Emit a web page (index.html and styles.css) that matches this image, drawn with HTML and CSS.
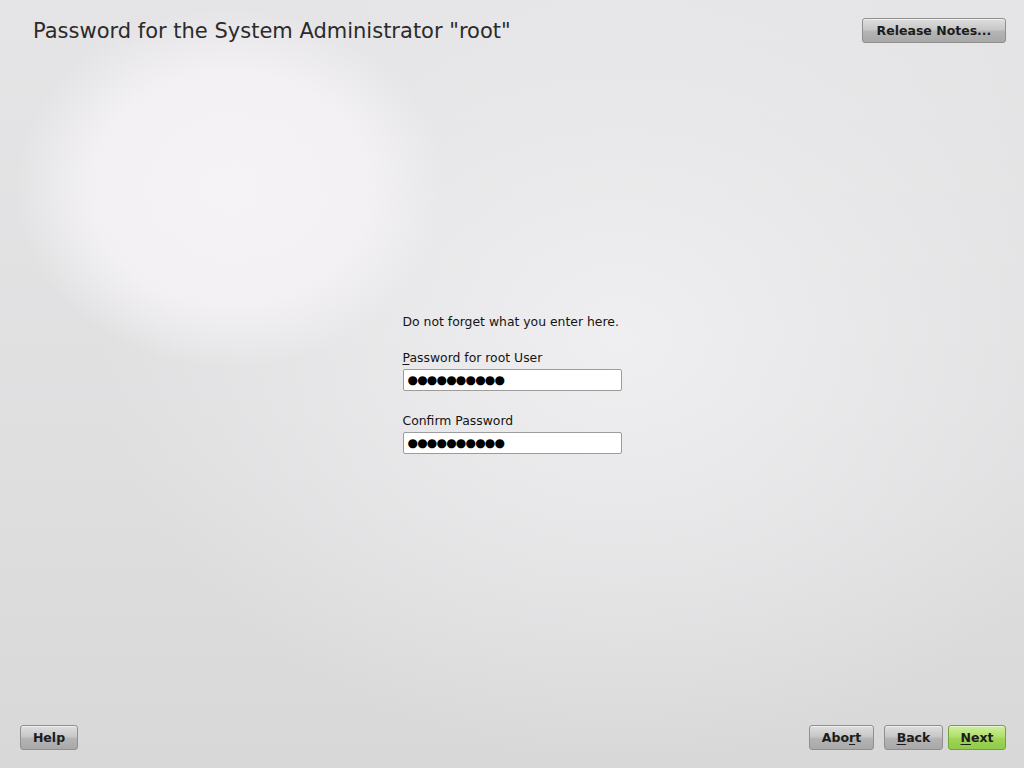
FILE: index.html
```html
<!DOCTYPE html>
<html lang="en">
<head>
<meta charset="utf-8">
<title>Password for the System Administrator "root"</title>
<link rel="stylesheet" href="styles.css">
</head>
<body>
<div class="screen">
  <header class="top">
    <h1 class="title">Password for the System Administrator "root"</h1>
    <button class="btn">Release Notes...</button>
  </header>
  <main class="content">
    <div class="form">
      <p class="note">Do not forget what you enter here.</p>
      <label class="label"><span class="ul">P</span>assword for root User</label>
      <div class="field">●●●●●●●●●●</div>
      <label class="label label-2">Confirm Password</label>
      <div class="field">●●●●●●●●●●</div>
    </div>
  </main>
  <footer class="bottom">
    <button class="btn btn-help">Help</button>
    <div class="nav">
      <button class="btn btn-abort">Abo<span class="ul">r</span>t</button>
      <button class="btn btn-back"><span class="ul">B</span>ack</button>
      <button class="btn btn-next"><span class="ul">N</span>ext</button>
    </div>
  </footer>
</div>
</body>
</html>
```

FILE: styles.css
```css
html, body {
  margin: 0;
  padding: 0;
}
body {
  font-family: "DejaVu Sans", sans-serif;
  color: #1a1a1a;
  background: #dcdcdc;
}
.screen {
  width: 1024px;
  height: 768px;
  display: flex;
  flex-direction: column;
  background:
    radial-gradient(ellipse 215px 180px at 230px 188px, rgba(245,243,246,1) 0%, rgba(244,242,245,0.9) 65%, rgba(240,238,241,0) 100%),
    radial-gradient(ellipse 520px 420px at 620px 340px, rgba(239,238,240,1) 0%, rgba(235,234,236,0.6) 55%, rgba(226,226,228,0) 100%),
    linear-gradient(180deg, #e5e4e6 0%, #dfdfe0 60%, #d8d8d8 100%);
  overflow: hidden;
}
.top {
  display: flex;
  justify-content: space-between;
  align-items: flex-start;
  padding: 18px 18px 0 33px;
}
.title {
  margin: 0;
  padding-top: 1px;
  font-size: 21px;
  font-weight: normal;
  color: #2b2b2b;
  line-height: 24px;
}
.btn {
  font-family: "DejaVu Sans", sans-serif;
  font-weight: bold;
  font-size: 12.5px;
  color: #1c1c1c;
  height: 25px;
  padding: 0;
  border: 1px solid #8f8f8f;
  border-radius: 3px;
  background: linear-gradient(180deg, #dedede 0%, #c8c8c8 45%, #b4b4b4 55%, #a8a8a8 100%);
  box-shadow: inset 0 1px 0 rgba(255,255,255,0.55);
  cursor: default;
}
.top .btn {
  width: 144px;
}
.content {
  flex: 1;
  display: flex;
  justify-content: center;
  align-items: center;
  padding: 0 0 1px 0;
}
.form {
  width: 219px;
  display: flex;
  flex-direction: column;
  font-size: 12.4px;
  color: #141414;
}
.note {
  margin: 0 0 20px 0;
  line-height: 16px;
}
.label {
  display: block;
  line-height: 16px;
  margin-bottom: 3px;
}
.label-2 {
  margin-top: 22px;
}
.ul {
  text-decoration: underline;
  text-underline-offset: 2px;
}
.field {
  box-sizing: border-box;
  height: 22px;
  background: #ffffff;
  border: 1px solid #9c9c9c;
  border-radius: 2px;
  padding: 0 0 0 4px;
  font-size: 12px;
  letter-spacing: -0.8px;
  line-height: 20px;
  color: #000;
}
.bottom {
  display: flex;
  justify-content: space-between;
  align-items: flex-end;
  padding: 0 18px 18px 20px;
}
.btn-help {
  width: 58px;
}
.nav {
  display: flex;
}
.btn-abort {
  width: 65px;
}
.btn-back {
  width: 59px;
  margin-left: 10px;
}
.btn-next {
  width: 58px;
  margin-left: 5px;
  border-color: #6ea43a;
  background: linear-gradient(180deg, #cdef9c 0%, #b2e06e 45%, #9fd55a 55%, #8fcb48 100%);
}
```
